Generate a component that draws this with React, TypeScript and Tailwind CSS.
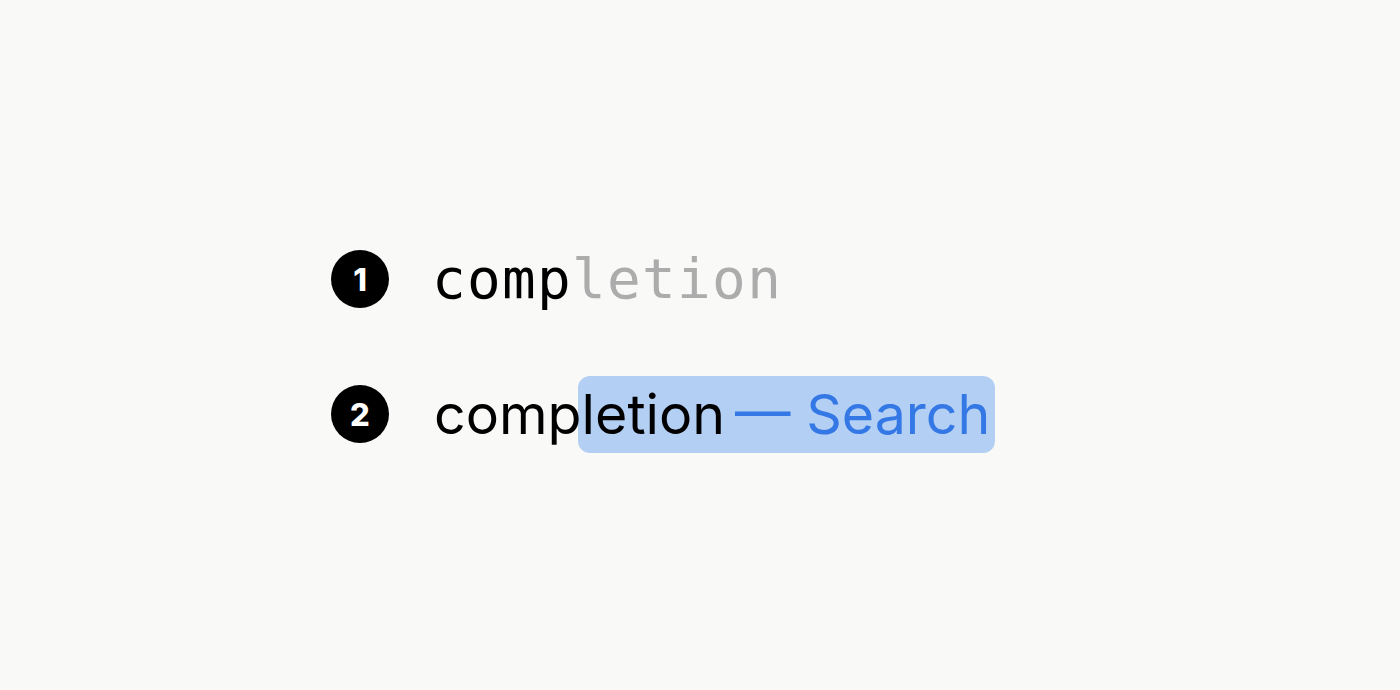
export default function App() {
  const badge = (n: number) => (
    <span className="flex h-[58px] w-[58px] shrink-0 items-center justify-center rounded-full bg-black">
      <span className="font-['Inter',sans-serif] text-[31px] leading-none font-extrabold text-white">{n}</span>
    </span>
  );

  return (
    <div className="h-[690px] w-full bg-[#f9f9f7]">
      <div className="flex flex-col gap-[77px] pl-[331px] pt-[250px]">
        <div className="flex h-[58px] items-center gap-[43px]">
          {badge(1)}
          <span className="font-['DejaVu_Sans_Mono',monospace] text-[56px] leading-none tracking-[1.3px]">
            <span className="text-black">comp</span>
            <span className="text-[#acacac]">letion</span>
          </span>
        </div>
        <div className="flex h-[58px] items-center gap-[45px]">
          {badge(2)}
          <span className="flex items-center font-['Inter',sans-serif] text-[55.5px] leading-none text-black">
            <span className="relative z-10">comp</span>
            <span className="-ml-[4px] flex h-[77px] items-center rounded-[12px] bg-[#b3cff3] pl-[4px] pr-[5px]">
              letion
              <span className="ml-[10px] text-[#3478e6]">— Search</span>
            </span>
          </span>
        </div>
      </div>
    </div>
  );
}
